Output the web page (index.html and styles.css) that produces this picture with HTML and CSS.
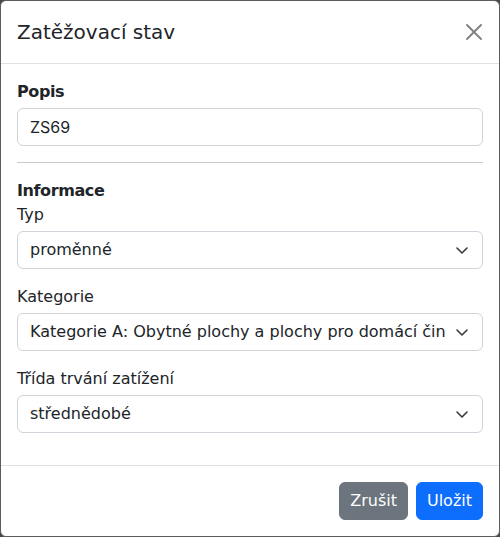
FILE: index.html
```html
<!DOCTYPE html>
<html lang="cs">
<head>
<meta charset="utf-8">
<title>Zatěžovací stav</title>
<link rel="stylesheet" href="styles.css">
</head>
<body>
<div class="modal">
  <div class="modal-header">
    <h5 class="modal-title">Zatěžovací stav</h5>
    <button class="btn-close" type="button" aria-label="Close">
      <svg width="16" height="16" viewBox="0 0 16 16"><path d="M1 1L15 15M15 1L1 15" stroke="#000" stroke-width="1.8" stroke-linecap="round"/></svg>
    </button>
  </div>
  <div class="modal-body">
    <div class="group">
      <label class="label label-strong">Popis</label>
      <input class="control" type="text" value="ZS69">
    </div>
    <hr class="divider">
    <div class="section-title">Informace</div>
    <div class="group">
      <label class="label">Typ</label>
      <div class="select-wrap">
        <select class="select"><option>proměnné</option></select>
        <svg class="chevron" width="16" height="12" viewBox="0 0 16 12"><path d="M3 4l5 5 5-5" fill="none" stroke="#343a40" stroke-width="1.6" stroke-linecap="round" stroke-linejoin="round"/></svg>
      </div>
    </div>
    <div class="group">
      <label class="label">Kategorie</label>
      <div class="select-wrap">
        <select class="select"><option>Kategorie A: Obytné plochy a plochy pro domácí činnosti</option></select>
        <svg class="chevron" width="16" height="12" viewBox="0 0 16 12"><path d="M3 4l5 5 5-5" fill="none" stroke="#343a40" stroke-width="1.6" stroke-linecap="round" stroke-linejoin="round"/></svg>
      </div>
    </div>
    <div class="group">
      <label class="label">Třída trvání zatížení</label>
      <div class="select-wrap">
        <select class="select"><option>střednědobé</option></select>
        <svg class="chevron" width="16" height="12" viewBox="0 0 16 12"><path d="M3 4l5 5 5-5" fill="none" stroke="#343a40" stroke-width="1.6" stroke-linecap="round" stroke-linejoin="round"/></svg>
      </div>
    </div>
  </div>
  <div class="modal-footer">
    <button class="btn btn-secondary" type="button">Zrušit</button>
    <button class="btn btn-primary" type="button">Uložit</button>
  </div>
</div>
</body>
</html>
```

FILE: styles.css
```css
* { box-sizing: border-box; }
html, body { margin: 0; padding: 0; }
body {
  background: #46494c;
  width: 500px;
  height: 537px;
  font-family: "DejaVu Sans", "Open Sans", sans-serif;
  color: #212529;
  font-size: 16px;
  line-height: 1.5;
}
.modal {
  width: 500px;
  height: 537px;
  background: #fff;
  border: 1px solid #5a5d60;
  border-radius: 6px;
  display: flex;
  flex-direction: column;
}
.modal-header {
  display: flex;
  align-items: center;
  justify-content: space-between;
  padding: 16px;
  border-bottom: 1px solid #dee2e6;
}
.modal-title {
  margin: 0;
  font-size: 20px;
  font-weight: 400;
  line-height: 30px;
  color: #212529;
}
.btn-close {
  border: 0;
  background: transparent;
  padding: 4px;
  margin: -4px -3px -4px 0;
  opacity: 0.5;
  display: flex;
  cursor: pointer;
}
.modal-body {
  padding: 16px 16px 0;
  flex: 1;
}
.group { margin-bottom: 16px; }
.label {
  display: block;
  margin-bottom: 4px;
  line-height: 24px;
}
.label-strong, .section-title {
  font-weight: 700;
  letter-spacing: -0.4px;
}
.section-title { line-height: 24px; }
.control, .select {
  display: block;
  width: 100%;
  height: 38px;
  padding: 6px 12px;
  font-size: 16px;
  line-height: 24px;
  color: #212529;
  background: #fff;
  border: 1px solid #ced4da;
  border-radius: 6px;
  outline: none;
}
.control { font-family: "Inter", "Liberation Sans", sans-serif; }
.select {
  font-family: "DejaVu Sans", "Open Sans", sans-serif;
  appearance: none;
  -webkit-appearance: none;
  padding-right: 36px;
}
.select-wrap { position: relative; }
.chevron {
  position: absolute;
  right: 13px;
  top: 13px;
  pointer-events: none;
}
.divider {
  border: 0;
  border-top: 1px solid #c8cbcf;
  margin: 0 0 16px;
  height: 0;
}
.modal-footer {
  display: flex;
  justify-content: flex-end;
  align-items: center;
  gap: 8px;
  padding: 16px;
  border-top: 1px solid #dee2e6;
}
.btn {
  height: 38px;
  padding: 6px 10px;
  border: 1px solid transparent;
  border-radius: 6px;
  font-family: "DejaVu Sans", "Open Sans", sans-serif;
  font-size: 16px;
  line-height: 24px;
  color: #fff;
}
.btn-secondary { background: #6c757d; border-color: #6c757d; }
.btn-primary { background: #0d6efd; border-color: #0d6efd; }
```
